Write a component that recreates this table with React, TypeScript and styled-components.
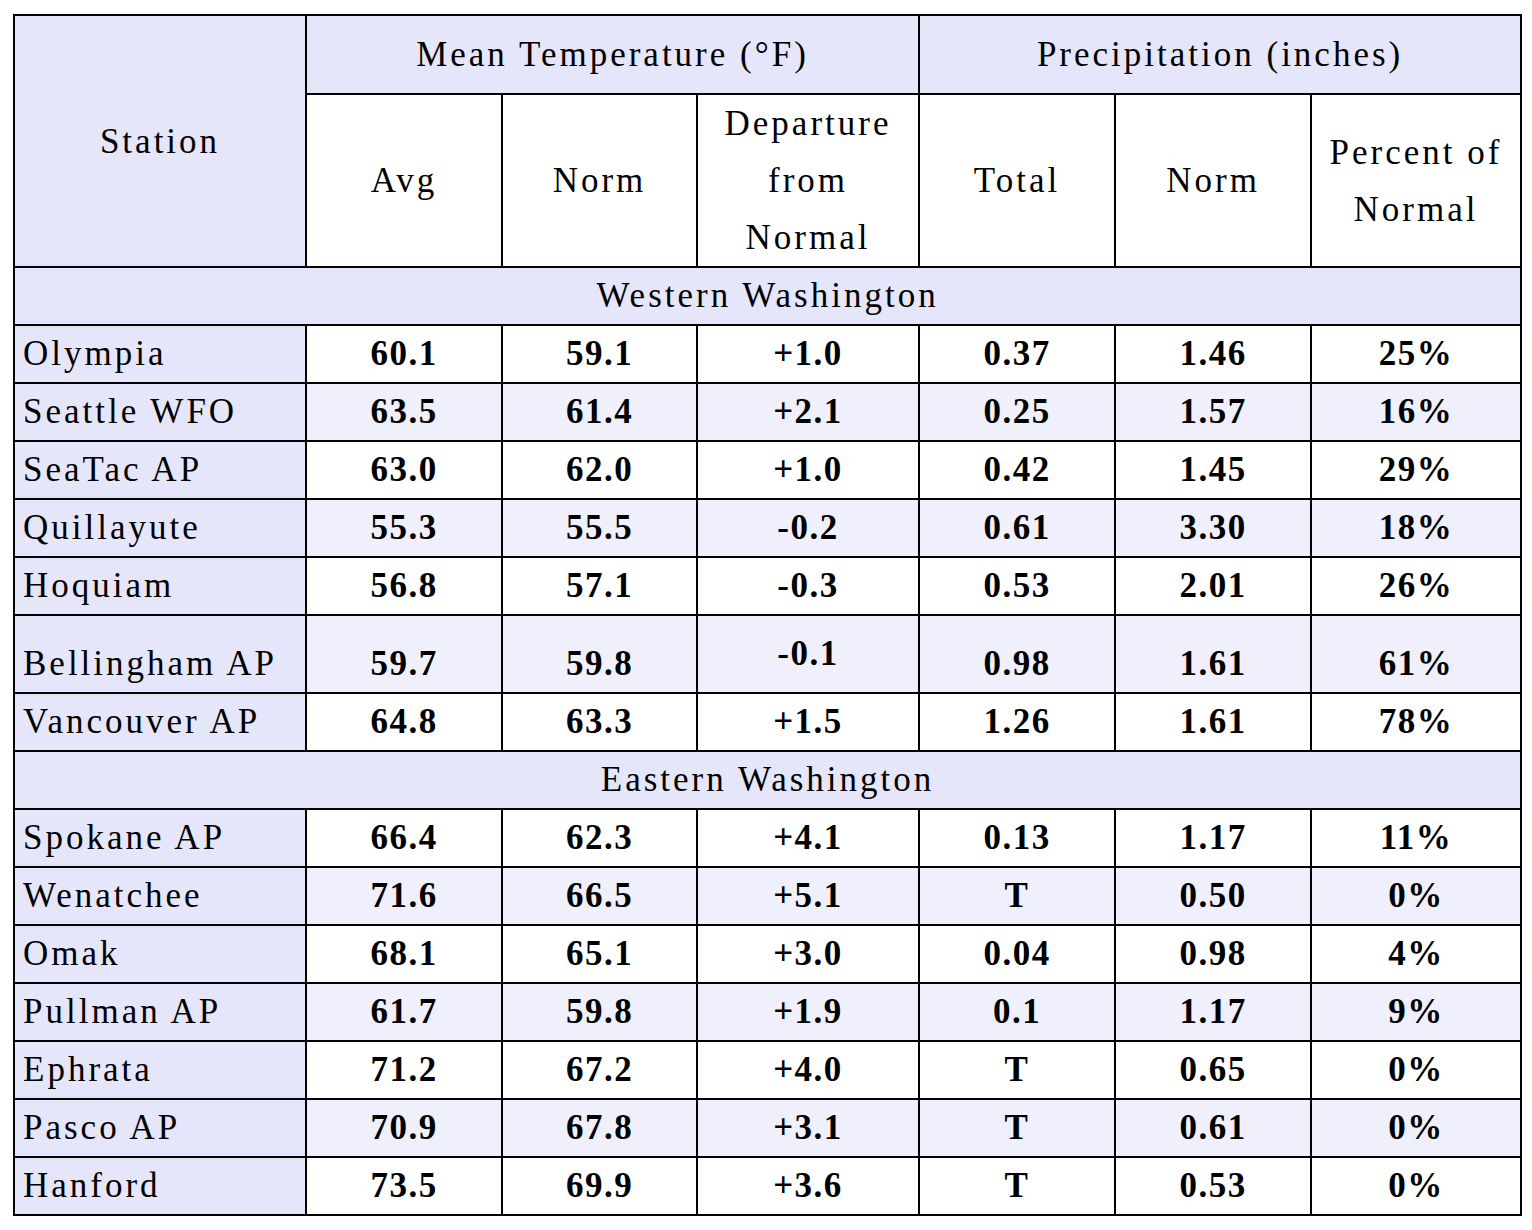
import React from 'react';
import styled, {createGlobalStyle} from 'styled-components';

type Station = {
    name: string;
    avg: string;
    norm: string;
    dep: string;
    total: string;
    pnorm: string;
    pct: string;
    tall?: boolean;
};

type Section = {
    title: string;
    stations: Station[];
};

const sections: Section[] = [
    {
        title: 'Western Washington',
        stations: [
            {name: 'Olympia', avg: '60.1', norm: '59.1', dep: '+1.0', total: '0.37', pnorm: '1.46', pct: '25%'},
            {name: 'Seattle WFO', avg: '63.5', norm: '61.4', dep: '+2.1', total: '0.25', pnorm: '1.57', pct: '16%'},
            {name: 'SeaTac AP', avg: '63.0', norm: '62.0', dep: '+1.0', total: '0.42', pnorm: '1.45', pct: '29%'},
            {name: 'Quillayute', avg: '55.3', norm: '55.5', dep: '-0.2', total: '0.61', pnorm: '3.30', pct: '18%'},
            {name: 'Hoquiam', avg: '56.8', norm: '57.1', dep: '-0.3', total: '0.53', pnorm: '2.01', pct: '26%'},
            {name: 'Bellingham AP', avg: '59.7', norm: '59.8', dep: '-0.1', total: '0.98', pnorm: '1.61', pct: '61%', tall: true},
            {name: 'Vancouver AP', avg: '64.8', norm: '63.3', dep: '+1.5', total: '1.26', pnorm: '1.61', pct: '78%'},
        ],
    },
    {
        title: 'Eastern Washington',
        stations: [
            {name: 'Spokane AP', avg: '66.4', norm: '62.3', dep: '+4.1', total: '0.13', pnorm: '1.17', pct: '11%'},
            {name: 'Wenatchee', avg: '71.6', norm: '66.5', dep: '+5.1', total: 'T', pnorm: '0.50', pct: '0%'},
            {name: 'Omak', avg: '68.1', norm: '65.1', dep: '+3.0', total: '0.04', pnorm: '0.98', pct: '4%'},
            {name: 'Pullman AP', avg: '61.7', norm: '59.8', dep: '+1.9', total: '0.1', pnorm: '1.17', pct: '9%'},
            {name: 'Ephrata', avg: '71.2', norm: '67.2', dep: '+4.0', total: 'T', pnorm: '0.65', pct: '0%'},
            {name: 'Pasco AP', avg: '70.9', norm: '67.8', dep: '+3.1', total: 'T', pnorm: '0.61', pct: '0%'},
            {name: 'Hanford', avg: '73.5', norm: '69.9', dep: '+3.6', total: 'T', pnorm: '0.53', pct: '0%'},
        ],
    },
];

// station, avg, norm, departure, total, norm, percent
const colWidths = [292, 196, 195, 222, 196, 196, 210];

export default function App() {
    return (
        <>
            <GlobalStyle/>
            <Table>
                <colgroup>
                    {colWidths.map((w, i) => <Col key={i} $w={w}/>)}
                </colgroup>
                <thead>
                    <tr>
                        <HeadCell rowSpan={2}>Station</HeadCell>
                        <GroupCell colSpan={3}>Mean Temperature (°F)</GroupCell>
                        <GroupCell colSpan={3}>Precipitation (inches)</GroupCell>
                    </tr>
                    <tr>
                        <SubHeadCell>Avg</SubHeadCell>
                        <SubHeadCell>Norm</SubHeadCell>
                        <SubHeadCell>Departure<br/>from<br/>Normal</SubHeadCell>
                        <SubHeadCell>Total</SubHeadCell>
                        <SubHeadCell>Norm</SubHeadCell>
                        <SubHeadCell>Percent of<br/>Normal</SubHeadCell>
                    </tr>
                </thead>
                {sections.map((section) => (
                    <tbody key={section.title}>
                        <tr>
                            <SectionCell colSpan={7}>{section.title}</SectionCell>
                        </tr>
                        {section.stations.map((s, i) => (
                            <Row key={s.name} $shaded={i % 2 === 1} $tall={!!s.tall}>
                                <StationCell>{s.name}</StationCell>
                                <ValueCell>{s.avg}</ValueCell>
                                <ValueCell>{s.norm}</ValueCell>
                                <ValueCell $middle>{s.dep}</ValueCell>
                                <ValueCell>{s.total}</ValueCell>
                                <ValueCell>{s.pnorm}</ValueCell>
                                <ValueCell>{s.pct}</ValueCell>
                            </Row>
                        ))}
                    </tbody>
                ))}
            </Table>
        </>
    );
}

const GlobalStyle = createGlobalStyle`
    body {
        margin: 0;
        background: #ffffff;
        font-family: "Liberation Serif", "Times New Roman", serif;
        color: #000000;
    }
`;

const Table = styled.table`
    border-collapse: collapse;
    table-layout: fixed;
    width: 1508px;
    margin: 14px 0 0 13px;
    font-family: "Liberation Serif", "Times New Roman", serif;
    font-size: 35px;
    letter-spacing: 3px;
    color: #000000;

    & td, & th {
        border: 2px solid #000000;
        padding: 0;
    }
`;

const Col = styled.col<{ $w: number }>`
    width: ${p => p.$w}px;
`;

const HeadCell = styled.th`
    background: #e6e6fa;
    font-weight: 400;
    text-align: center;
    vertical-align: middle;
    line-height: 57px;
`;

const GroupCell = styled.th`
    background: #e6e6fa;
    font-weight: 400;
    text-align: center;
    line-height: 77px;
`;

const SubHeadCell = styled.th`
    background: #ffffff;
    font-weight: 400;
    text-align: center;
    vertical-align: middle;
    line-height: 57px;
`;

const SectionCell = styled.td`
    background: #e6e6fa;
    text-align: center;
    line-height: 56px;
`;

const Row = styled.tr<{ $shaded: boolean; $tall: boolean }>`
    background: ${p => (p.$shaded ? '#f0f0fc' : '#ffffff')};
    height: ${p => (p.$tall ? '78px' : 'auto')};

    & > td {
        vertical-align: ${p => (p.$tall ? 'bottom' : 'middle')};
    }
`;

const StationCell = styled.td`
    background: #e6e6fa;
    text-align: left;
    line-height: 56px;
    && {
        padding-left: 8px;
    }
`;

const ValueCell = styled.td<{ $middle?: boolean }>`
    text-align: center;
    font-weight: 700;
    letter-spacing: 1.5px;
    line-height: 56px;
    ${p => (p.$middle ? '&& { vertical-align: middle; }' : '')}
`;
